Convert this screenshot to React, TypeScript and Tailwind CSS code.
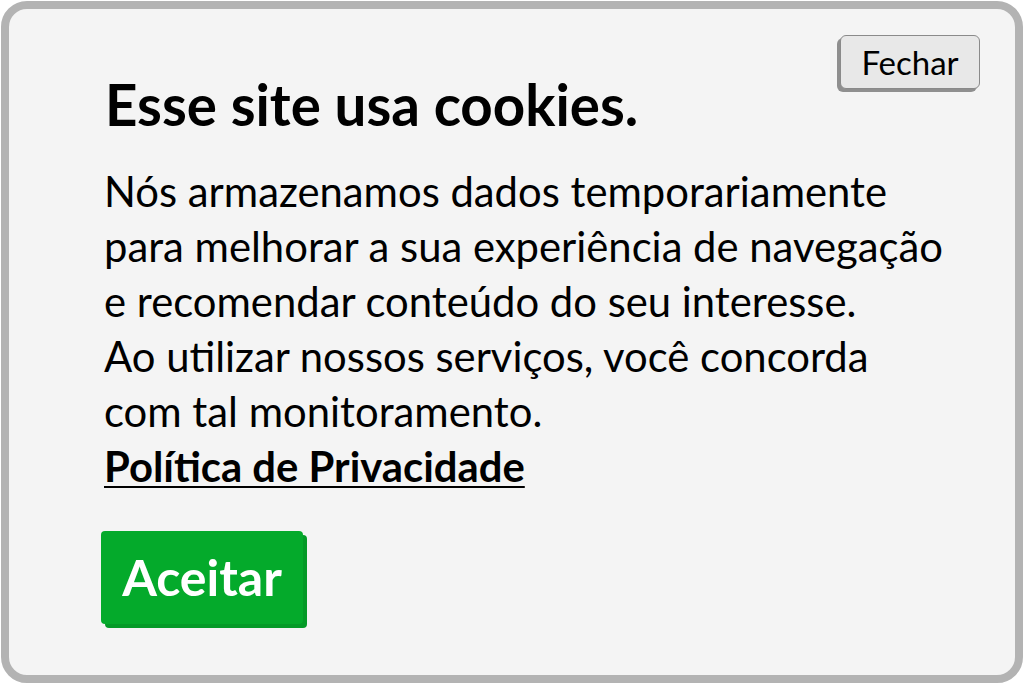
import React from "react";

const body = [
  "Nós armazenamos dados temporariamente",
  "para melhorar a sua experiência de navegação",
  "e recomendar conteúdo do seu interesse.",
  "Ao utilizar nossos serviços, você concorda",
  "com tal monitoramento.",
];

export default function App() {
  return (
    <div className="h-[684px] w-[1024px] bg-white p-px font-['Lato',sans-serif] text-black">
      <div className="relative flex h-full flex-col rounded-[26px] border-[8px] border-[#b3b3b3] bg-[#f4f4f4] pl-[95px] pt-[63px]">
        <button className="absolute right-[35px] top-[26px] h-[54px] w-[140px] rounded-[6px] border border-[#8a8a8a] bg-[#e8e8e8] text-[33px] leading-none shadow-[-3px_3px_0_#8f8f8f]">
          Fechar
        </button>
        <h1 className="ml-[1px] text-[56.5px] font-bold leading-[64px]">Esse site usa cookies.</h1>
        <div className="mt-[28px] text-[41.8px] leading-[55px]">
          {body.map((line) => (
            <p key={line}>{line}</p>
          ))}
          <a className="font-bold underline decoration-2 underline-offset-4">Política de Privacidade</a>
        </div>
        <button className="-ml-[3px] mt-[37px] h-[93px] w-[202px] rounded-[4px] bg-[#04aa2b] text-[50px] font-bold text-white shadow-[4px_4px_0_#049a27]">
          Aceitar
        </button>
      </div>
    </div>
  );
}
